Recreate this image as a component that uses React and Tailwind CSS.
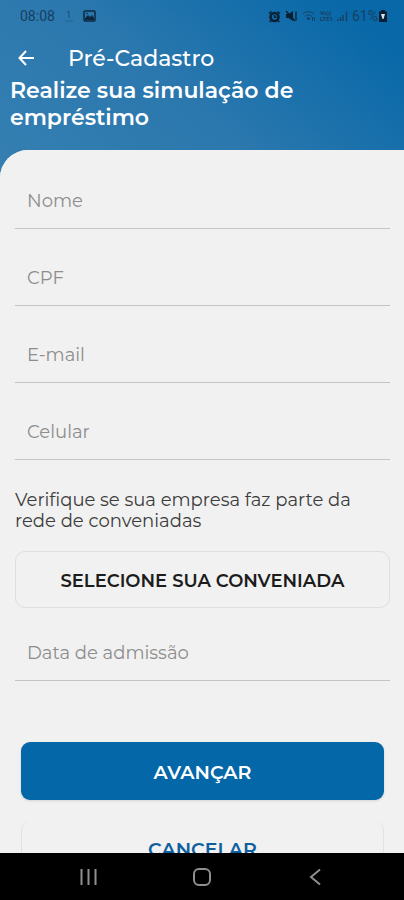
import React from 'react';

const personalFields = [
  { id: 'nome', label: 'Nome', type: 'text' },
  { id: 'cpf', label: 'CPF', type: 'text' },
  { id: 'email', label: 'E-mail', type: 'email' },
  { id: 'celular', label: 'Celular', type: 'tel' },
];

function Field({ id, label, type }) {
  return (
    <input
      id={id}
      name={id}
      type={type}
      aria-label={label}
      placeholder={label}
      className="block h-14 w-full border-b border-[#c4c4c4] bg-transparent px-3 text-[18px] text-[#333333] outline-none placeholder:text-[#8d8d8d]"
    />
  );
}

function StatusBar() {
  return (
    <div className="flex h-8 items-center justify-between pr-4 pl-5 font-[Roboto,sans-serif] text-[14px] text-[#173f62]">
      <div className="flex items-center gap-2">
        <span>08:08</span>
        <svg width="12" height="14" viewBox="0 0 12 14" fill="none" stroke="currentColor" aria-hidden="true">
          <path d="M6 2v7M4 4l2-2" opacity=".7" />
          <path d="M2 12h8" opacity=".4" />
        </svg>
        <svg width="13" height="12" viewBox="0 0 13 12" aria-hidden="true">
          <rect x="1" y="1" width="11" height="10" rx="1" fill="none" stroke="#0c2740" strokeWidth="1.5" />
          <path d="M2 10V8l3-3 2 2 2-2 2 3v2z" fill="#0c2740" />
          <circle cx="4" cy="3.5" r=".8" fill="#0c2740" />
        </svg>
      </div>
      <div className="flex items-center gap-1">
        <svg width="13" height="13" viewBox="0 0 13 13" aria-hidden="true">
          <circle cx="6.5" cy="7" r="4" fill="none" stroke="#0a2135" strokeWidth="2.6" />
          <path d="M1 3.5 3.5 1.5M12 3.5 9.5 1.5M3 10.5 1.8 12M10 10.5l1.2 1.5M6.5 5v2.3H8.5" fill="none" stroke="#0a2135" strokeWidth="1.6" />
        </svg>
        <svg width="13" height="12" viewBox="0 0 13 12" aria-hidden="true">
          <path d="M1 4h2.5L8 1v10L3.500 8H1z" fill="#0a2135" />
          <path d="M1 1l9 10" stroke="#0a2135" strokeWidth="1.5" />
          <path d="M11 1.500v9" stroke="#0a2135" strokeWidth="1.3" />
        </svg>
        <svg width="14" height="12" viewBox="0 0 14 12" fill="none" stroke="currentColor" aria-hidden="true">
          <path d="M1 4c3-3 8-3 11 0M3 6.500c2-2 5-2 7 0" />
          <path d="M5 8.500c1-1 2-1 3 0L6.500 10z" fill="currentColor" />
          <path d="M10.500 7v4M12.500 7v4" />
        </svg>
        <span className="flex flex-col text-[6px] leading-[6px] font-bold">
          <span>Vo))</span>
          <span>LTE1</span>
        </span>
        <svg width="11" height="12" viewBox="0 0 11 12" stroke="currentColor" strokeWidth="1.4" aria-hidden="true">
          <path d="M1 11V9M3.500 11V7M6 11V5M9.500 11V1.500" />
        </svg>
        <span className="flex items-center">
          61%
          <svg width="10" height="12" viewBox="0 0 10 12" aria-hidden="true">
            <path d="M3 0h4v1.500h2V12H1V1.500h2z" fill="#0a2135" />
            <path d="M3 4h4L5.500 9h-1z" fill="#d7e6f2" />
          </svg>
        </span>
      </div>
    </div>
  );
}

function NavigationBar() {
  return (
    <nav aria-label="Sistema" className="grid h-[47px] shrink-0 grid-cols-[1fr_50px_1fr] bg-black text-[#8f8f8f]">
      <button type="button" aria-label="Recentes" className="flex items-center justify-end pr-20">
        <svg width="17" height="18" viewBox="0 0 17 18" stroke="currentColor" strokeWidth="2">
          <path d="M1.500 1v16M8.500 1v16M15.500 1v16" />
        </svg>
      </button>
      <button type="button" aria-label="Início" className="flex items-center justify-center">
        <svg width="20" height="20" viewBox="0 0 20 20" fill="none" stroke="currentColor" strokeWidth="2">
          <rect x="2" y="2" width="16" height="16" rx="5" />
        </svg>
      </button>
      <button type="button" aria-label="Voltar" className="flex items-center pl-[82px]">
        <svg width="12" height="18" viewBox="0 0 12 18" fill="none" stroke="currentColor" strokeWidth="2">
          <path d="M11 1.500 2 9l9 7.500" />
        </svg>
      </button>
    </nav>
  );
}

export default function App() {
  return (
    <div className="flex h-screen flex-col overflow-hidden bg-[#f1f1f1] font-[Montserrat,Inter,sans-serif]">
      <div className="min-h-0 flex-1 overflow-hidden bg-[#2c7ab0]">
        <div className="bg-[linear-gradient(40deg,#357fb2_0%,#2b78ae_45%,#0868a8_90%)]">
          <header className="text-white">
            <StatusBar />
            <div className="flex h-[45px] items-center pt-[9px] pl-[18px]">
              <button type="button" aria-label="Voltar" className="flex w-[50px] items-center">
                <svg width="17" height="18" viewBox="0 0 17 18" fill="none" stroke="currentColor" strokeWidth="2">
                  <path d="M16 8H2M8 1 1.500 8 8 15" />
                </svg>
              </button>
              <span className="text-[22px] leading-7 font-medium">Pré-Cadastro</span>
            </div>
            <h1 className="h-[73px] max-w-[340px] pl-[10px] text-[22px] leading-[27px] font-semibold">
              Realize sua simulação de empréstimo
            </h1>
          </header>
          <div className="h-7 rounded-tl-[28px] bg-[#f1f1f1]" />
        </div>

        <form className="-mt-7 min-h-full rounded-tl-[28px] bg-[#f1f1f1] pt-[23px] pr-[14px] pl-[15px]">
          <div className="flex flex-col gap-[21px]">
            {personalFields.map((field) => (
              <Field key={field.id} {...field} />
            ))}
          </div>

          <p className="mt-[30px] text-[18px] leading-[21px] text-[#3c3c3c]">
            Verifique se sua empresa faz parte da rede de conveniadas
          </p>
          <button
            type="button"
            className="mt-[19px] h-[57px] w-full rounded-[10px] border border-[#dedede] pt-[3px] text-[18px] font-semibold text-[#1c1c1c]"
          >
            SELECIONE SUA CONVENIADA
          </button>
          <div className="mt-[17px]">
            <Field id="admissao" label="Data de admissão" type="text" />
          </div>

          <div className="mt-[61px] flex flex-col gap-[21px] px-[6px]">
            <button
              type="submit"
              className="h-[58px] w-full rounded-[9px] bg-[#0467a8] pt-[4px] text-[19px] font-semibold text-white shadow-sm"
            >
              AVANÇAR
            </button>
            <button
              type="button"
              className="h-[58px] w-full rounded-[9px] border-x border-[#e2e2e2] text-[19px] font-semibold text-[#0f5f9f]"
            >
              CANCELAR
            </button>
          </div>
        </form>
      </div>
      <NavigationBar />
    </div>
  );
}
